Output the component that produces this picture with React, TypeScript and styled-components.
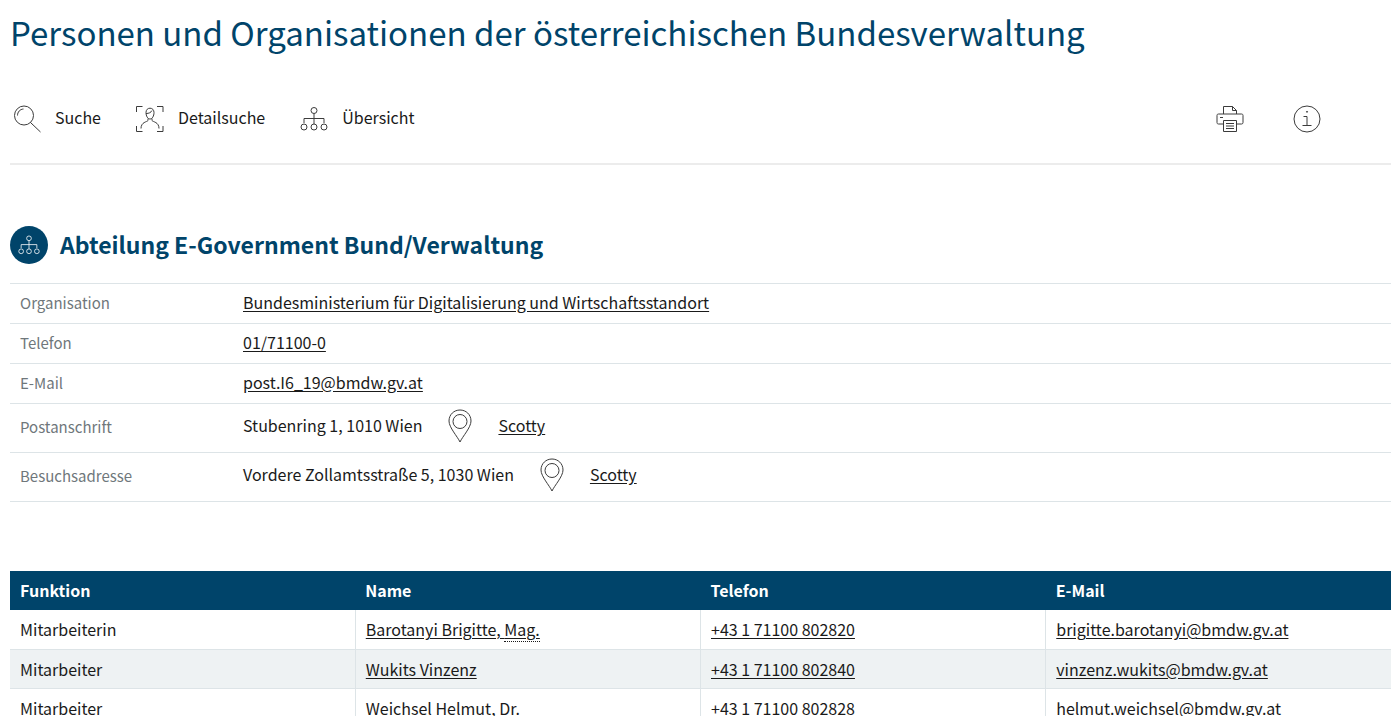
import React from "react";
import styled, { createGlobalStyle } from "styled-components";

const navy = "#00446a";
const line = "#dde4e7";
const ink = "#1a1a1a";
const stroke = "#3c3c3c";

const GlobalStyle = createGlobalStyle`
  * { box-sizing: border-box; }
  body {
    margin: 0;
    background: #fff;
    color: ${ink};
    font-family: "Noto Sans CJK SC", "Noto Sans", sans-serif;
    font-size: 16px;
    line-height: 24px;
  }
`;

const Page = styled.main`
  padding: 8px 9px 0 10px;
`;

const Title = styled.h1`
  margin: 0;
  color: ${navy};
  font-size: 33px;
  font-weight: 400;
  line-height: 48px;
`;

const Toolbar = styled.nav`
  display: flex;
  align-items: center;
  justify-content: space-between;
  height: 109px;
  padding: 19px 70px 0 3px;
  border-bottom: 2px solid #ececec;
  margin-bottom: 61px;
`;

const Group = styled.div<{ $gap: number }>`
  display: flex;
  align-items: center;
  gap: ${(p) => p.$gap}px;
`;

const ToolLink = styled.a`
  display: flex;
  align-items: flex-start;
  gap: 14px;
  color: ${ink};
  text-decoration: none;
`;

const ToolButton = styled.button`
  display: flex;
  padding: 0;
  border: 0;
  background: none;
  cursor: pointer;
`;

const Icon = styled.svg<{ $w?: number; $h?: number; $color?: string }>`
  display: block;
  flex: none;
  width: ${(p) => p.$w ?? 28}px;
  height: ${(p) => p.$h ?? 28}px;
  color: ${(p) => p.$color ?? stroke};
  fill: none;
  stroke: currentColor;
  stroke-width: 1;
`;

const Heading = styled.header`
  display: flex;
  align-items: center;
  gap: 12px;
  margin-bottom: 19px;
`;

const Badge = styled.span`
  display: flex;
  align-items: center;
  justify-content: center;
  width: 38px;
  height: 38px;
  border-radius: 50%;
  background: ${navy};
`;

const Subtitle = styled.h2`
  margin: 0;
  padding-bottom: 2px;
  color: ${navy};
  font-size: 23px;
  font-weight: 700;
  line-height: 36px;
`;

const Details = styled.table`
  width: 100%;
  border-collapse: collapse;
  border-top: 1px solid ${line};
  margin-bottom: 69px;
`;

const DetailRow = styled.tr<{ $tall?: boolean }>`
  height: ${(p) => (p.$tall ? 49 : 40)}px;
  border-bottom: 1px solid ${line};
`;

const Label = styled.th`
  width: 223px;
  padding: 0 10px 2px;
  color: #6f777b;
  font-size: 15px;
  font-weight: 400;
  text-align: left;
`;

const Value = styled.td`
  padding: 0 10px 4px;
`;

const Address = styled.div`
  display: flex;
  align-items: flex-start;
  gap: 26px;
  line-height: 32px;
`;

const Link = styled.a`
  color: ${ink};
  text-decoration: underline;
  text-underline-offset: 2px;
`;

const Staff = styled.table`
  width: 100%;
  table-layout: fixed;
  border-collapse: collapse;
`;

const HeadCell = styled.th`
  height: 39px;
  padding: 0 10px 2px;
  background: ${navy};
  color: #fff;
  font-weight: 700;
  text-align: left;
`;

const Cell = styled.td`
  height: 39px;
  padding: 0 10px;
  border-bottom: 1px solid ${line};
  & + & {
    border-left: 1px solid ${line};
  }
`;

const StaffRow = styled.tr`
  &:nth-child(even) {
    background: #eef2f3;
  }
`;

const Abbr = styled.abbr`
  text-decoration: none;
  border-bottom: 1px dotted ${ink};
`;

const OrgChart = ({ size = 28, color }: { size?: number; color?: string }) => (
  <Icon viewBox="0 0 28 28" $w={size} $h={size} $color={color} aria-hidden="true">
    <circle cx="14" cy="5.500" r="3" />
    <path d="M14 8.500v10.500M4 18v-4.500h20v4.500" />
    <circle cx="4" cy="22" r="3" />
    <circle cx="14" cy="22" r="3" />
    <circle cx="24" cy="22" r="3" />
  </Icon>
);

const Magnifier = () => (
  <Icon viewBox="0 0 28 28" aria-hidden="true">
    <circle cx="11" cy="10.500" r="9.500" />
    <path d="M17.500 17.500l10 9.500M4.500 10.500c0-3.500 2.500-6.300 6-6.500M17.500 17.500l2 2" />
  </Icon>
);

const PersonFrame = () => (
  <Icon viewBox="0 0 28 28" aria-hidden="true">
    <path d="M.500 7V1.500h6M21 1.500h6V7M.500 21v5.500h6M21 26.500h6V21" />
    <path d="M10 7.500c0-2.700 1.700-4.300 4-4.300s4 1.600 4 4.300c0 3.500-1.700 6.500-4 6.500s-4-3-4-6.500zM10 8.500c3 0 5-1 6-3M12 13.500v2c-1 1.500-7 1.500-7 8M16 13.500v2c1 1.500 7 1.500 7 8" />
  </Icon>
);

const Printer = () => (
  <Icon viewBox="0 0 28 28" aria-hidden="true">
    <path d="M7.500 9V1.500h9L20.500 5.500V9M16.500 1.500v4h4" />
    <path d="M7 19H2.500C1.500 19 1 18.500 1 17.500v-7C1 9.500 1.500 9 2.500 9h23c1 0 1.500.5 1.500 1.500v7c0 1-.5 1.500-1.500 1.500H21M4 12.500h3" />
    <path d="M7.500 15.500h13v11h-13zM10 18.500h8M10 21h8M10 23.500h8" />
  </Icon>
);

const Info = () => (
  <Icon viewBox="0 0 28 28" aria-hidden="true">
    <circle cx="14" cy="14" r="13" />
    <path d="M10.500 11.500H14v9M9.500 20.500h9" />
    <circle cx="14" cy="6.800" r=".5" fill="currentColor" />
  </Icon>
);

const Pin = () => (
  <Icon viewBox="0 0 24 34" $w={24} $h={34} aria-hidden="true">
    <path d="M12 33C9.500 27.500 1 18.500 1 12 1 5.500 6 1 12 1s11 4.500 11 11c0 6.500-8.500 15.500-11 21z" />
    <circle cx="12" cy="12.500" r="7" />
  </Icon>
);

const addresses = [
  { label: "Postanschrift", text: "Stubenring 1, 1010 Wien" },
  { label: "Besuchsadresse", text: "Vordere Zollamtsstraße 5, 1030 Wien" },
];

const contacts = [
  { label: "Organisation", text: "Bundesministerium für Digitalisierung und Wirtschaftsstandort", href: "#organisation" },
  { label: "Telefon", text: "01/71100-0", href: "tel:+431711000" },
  { label: "E-Mail", text: "post.I6_19@bmdw.gv.at", href: "mailto:post.I6_19@bmdw.gv.at" },
];

const staff = [
  { role: "Mitarbeiterin", name: "Barotanyi Brigitte, ", degree: "Mag.", phone: "+43 1 71100 802820", mail: "brigitte.barotanyi@bmdw.gv.at" },
  { role: "Mitarbeiter", name: "Wukits Vinzenz", phone: "+43 1 71100 802840", mail: "vinzenz.wukits@bmdw.gv.at" },
  { role: "Mitarbeiter", name: "Weichsel Helmut, ", degree: "Dr.", phone: "+43 1 71100 802828", mail: "helmut.weichsel@bmdw.gv.at" },
];

export default function App() {
  return (
    <Page>
      <GlobalStyle />
      <Title>Personen und Organisationen der österreichischen Bundesverwaltung</Title>
      <Toolbar>
        <Group $gap={35}>
          <ToolLink href="#suche"><Magnifier />Suche</ToolLink>
          <ToolLink href="#detailsuche"><PersonFrame />Detailsuche</ToolLink>
          <ToolLink href="#uebersicht"><OrgChart />Übersicht</ToolLink>
        </Group>
        <Group $gap={49}>
          <ToolButton type="button" aria-label="Drucken"><Printer /></ToolButton>
          <ToolButton type="button" aria-label="Information"><Info /></ToolButton>
        </Group>
      </Toolbar>
      <Heading>
        <Badge><OrgChart size={22} color="#fff" /></Badge>
        <Subtitle>Abteilung E-Government Bund/Verwaltung</Subtitle>
      </Heading>
      <Details>
        <tbody>
          {contacts.map((c) => (
            <DetailRow key={c.label}>
              <Label scope="row">{c.label}</Label>
              <Value><Link href={c.href}>{c.text}</Link></Value>
            </DetailRow>
          ))}
          {addresses.map((a) => (
            <DetailRow key={a.label} $tall>
              <Label scope="row">{a.label}</Label>
              <Value>
                <Address>
                  <span>{a.text}</span>
                  <Pin />
                  <Link href="#scotty">Scotty</Link>
                </Address>
              </Value>
            </DetailRow>
          ))}
        </tbody>
      </Details>
      <Staff>
        <thead>
          <tr>
            <HeadCell scope="col">Funktion</HeadCell>
            <HeadCell scope="col">Name</HeadCell>
            <HeadCell scope="col">Telefon</HeadCell>
            <HeadCell scope="col">E-Mail</HeadCell>
          </tr>
        </thead>
        <tbody>
          {staff.map((s) => (
            <StaffRow key={s.mail}>
              <Cell>{s.role}</Cell>
              <Cell><Link href="#person">{s.name}{s.degree && <Abbr>{s.degree}</Abbr>}</Link></Cell>
              <Cell><Link href={"tel:" + s.phone.replace(/ /g, "")}>{s.phone}</Link></Cell>
              <Cell><Link href={"mailto:" + s.mail}>{s.mail}</Link></Cell>
            </StaffRow>
          ))}
        </tbody>
      </Staff>
    </Page>
  );
}
